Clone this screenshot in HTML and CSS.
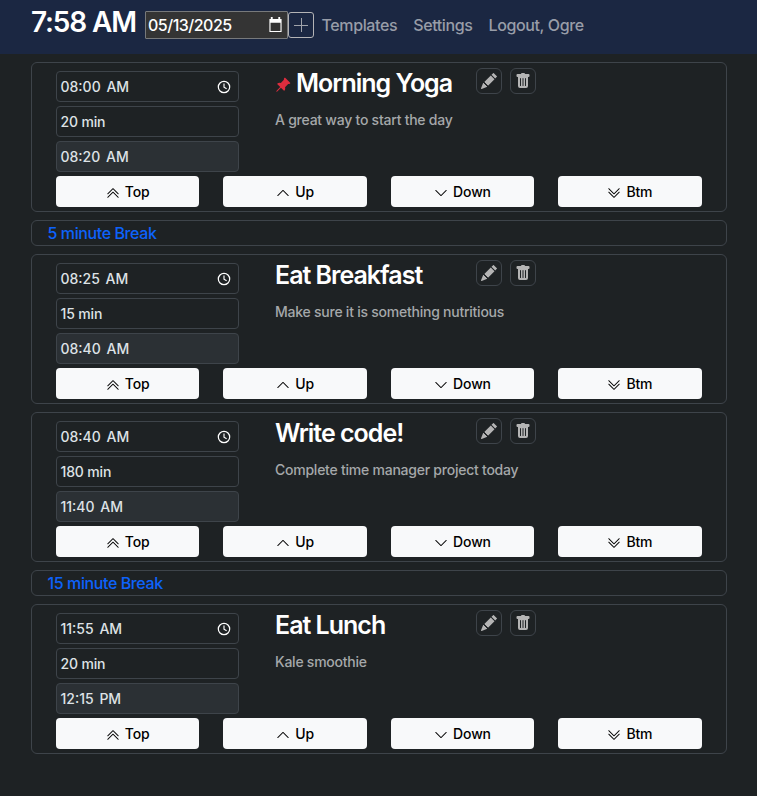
FILE: index.html
```html
<!DOCTYPE html>
<html lang="en">
<head>
<meta charset="utf-8">
<title>Time Manager</title>
<link rel="stylesheet" href="styles.css">
</head>
<body>
<svg class="sprite" aria-hidden="true">
  <symbol id="up" viewBox="0 0 16 16"><path fill-rule="evenodd" d="M7.646 4.646a.5.5 0 0 1 .708 0l6 6a.5.5 0 0 1-.708.708L8 5.707l-5.646 5.647a.5.5 0 0 1-.708-.708z"/></symbol>
  <symbol id="down" viewBox="0 0 16 16"><path fill-rule="evenodd" d="M1.646 4.646a.5.5 0 0 1 .708 0L8 10.293l5.646-5.647a.5.5 0 0 1 .708.708l-6 6a.5.5 0 0 1-.708 0l-6-6a.5.5 0 0 1 0-.708"/></symbol>
  <symbol id="top" viewBox="0 0 16 16"><path d="M7.646 2.646a.5.5 0 0 1 .708 0l6 6a.5.5 0 0 1-.708.708L8 3.707 2.354 9.354a.5.5 0 1 1-.708-.708z"/><path d="M7.646 6.646a.5.5 0 0 1 .708 0l6 6a.5.5 0 0 1-.708.708L8 7.707l-5.646 5.647a.5.5 0 0 1-.708-.708z"/></symbol>
  <symbol id="btm" viewBox="0 0 16 16"><path d="M1.646 6.646a.5.5 0 0 1 .708 0L8 12.293l5.646-5.647a.5.5 0 0 1 .708.708l-6 6a.5.5 0 0 1-.708 0l-6-6a.5.5 0 0 1 0-.708"/><path d="M1.646 2.646a.5.5 0 0 1 .708 0L8 8.293l5.646-5.647a.5.5 0 0 1 .708.708l-6 6a.5.5 0 0 1-.708 0l-6-6a.5.5 0 0 1 0-.708"/></symbol>
  <symbol id="pencil" viewBox="0 0 16 16"><path d="M12.854.146a.5.5 0 0 0-.707 0L10.5 1.793 14.207 5.5l1.647-1.646a.5.5 0 0 0 0-.708zm.646 6.061L9.793 2.5 3.293 9H3.5a.5.5 0 0 1 .5.5v.5h.5a.5.5 0 0 1 .5.5v.5h.5a.5.5 0 0 1 .5.5v.5h.5a.5.5 0 0 1 .5.5v.207zm-7.468 7.468A.5.5 0 0 1 6 13.5V13h-.5a.5.5 0 0 1-.5-.5V12h-.5a.5.5 0 0 1-.5-.5V11h-.5a.5.5 0 0 1-.5-.5V10h-.5a.5.5 0 0 1-.175-.032l-.179.178a.5.5 0 0 0-.11.168l-2 5a.5.5 0 0 0 .65.65l5-2a.5.5 0 0 0 .168-.11z"/></symbol>
  <symbol id="trash" viewBox="0 0 16 16"><path d="M2.500 1a1 1 0 0 0-1 1v1a1 1 0 0 0 1 1H3v9a2 2 0 0 0 2 2h6a2 2 0 0 0 2-2V4h.5a1 1 0 0 0 1-1V2a1 1 0 0 0-1-1H10a1 1 0 0 0-1-1H7a1 1 0 0 0-1 1zm3 4a.5.5 0 0 1 .5.5v7a.5.5 0 0 1-1 0v-7a.5.5 0 0 1 .5-.5M8 5a.5.5 0 0 1 .5.5v7a.5.5 0 0 1-1 0v-7A.5.5 0 0 1 8 5m3 .5v7a.5.5 0 0 1-1 0v-7a.5.5 0 0 1 1 0"/></symbol>
  <symbol id="clock" viewBox="0 0 16 16"><circle cx="8" cy="8" r="6.500" fill="none" stroke="currentColor" stroke-width="1.400"/><path d="M8 4v4.300l3 1.700" fill="none" stroke="currentColor" stroke-width="1.300"/></symbol>
  <symbol id="calendar" viewBox="0 0 16 16"><path d="M3 0h2v2h6V0h2v2h1.500v14h-13V2H3zM2.700 6v8.800h10.600V6z" fill-rule="evenodd"/></symbol>
  <symbol id="pin" viewBox="0 0 16 16"><path d="M9.828.722a.5.5 0 0 1 .354.146l4.950 4.950a.5.5 0 0 1 0 .707c-.480.480-1.072.588-1.503.588-.177 0-.335-.018-.460-.039l-3.134 3.134a6 6 0 0 1 .160 1.013c.046.702-.032 1.687-.720 2.375a.5.5 0 0 1-.707 0l-2.829-2.828-3.182 3.182c-.195.195-1.219.902-1.414.707s.512-1.220.707-1.414l3.182-3.182-2.828-2.829a.5.5 0 0 1 0-.707c.688-.688 1.673-.767 2.375-.720a6 6 0 0 1 1.013.160l3.134-3.133a3 3 0 0 1-.040-.461c0-.430.108-1.022.589-1.503a.5.5 0 0 1 .353-.146"/></symbol>
</svg>

<header class="navbar">
  <div class="clock-now">7:58 AM</div>
  <div class="date"><span>05/13/2025</span><svg><use href="#calendar"/></svg></div>
  <button class="add" aria-label="Add"></button>
  <nav><a>Templates</a><a>Settings</a><a>Logout, Ogre</a></nav>
</header>

<main>
  <section class="card">
    <div class="details">
      <div class="fields"><div class="field time"><span>08:00 AM</span><svg><use href="#clock"/></svg></div><div class="field">20 min</div><div class="field time end">08:20 AM</div></div>
      <div class="info"><h2><svg class="pin"><use href="#pin"/></svg>Morning Yoga</h2><p>A great way to start the day</p></div>
      <div class="tools"><button><svg><use href="#pencil"/></svg></button><button><svg><use href="#trash"/></svg></button></div>
    </div>
    <div class="moves"><button><svg><use href="#top"/></svg>Top</button><button><svg><use href="#up"/></svg>Up</button><button><svg><use href="#down"/></svg>Down</button><button><svg><use href="#btm"/></svg>Btm</button></div>
  </section>
  <div class="break">5 minute Break</div>
  <section class="card">
    <div class="details">
      <div class="fields"><div class="field time"><span>08:25 AM</span><svg><use href="#clock"/></svg></div><div class="field">15 min</div><div class="field time end">08:40 AM</div></div>
      <div class="info"><h2>Eat Breakfast</h2><p>Make sure it is something nutritious</p></div>
      <div class="tools"><button><svg><use href="#pencil"/></svg></button><button><svg><use href="#trash"/></svg></button></div>
    </div>
    <div class="moves"><button><svg><use href="#top"/></svg>Top</button><button><svg><use href="#up"/></svg>Up</button><button><svg><use href="#down"/></svg>Down</button><button><svg><use href="#btm"/></svg>Btm</button></div>
  </section>
  <section class="card">
    <div class="details">
      <div class="fields"><div class="field time"><span>08:40 AM</span><svg><use href="#clock"/></svg></div><div class="field">180 min</div><div class="field time end">11:40 AM</div></div>
      <div class="info"><h2>Write code!</h2><p>Complete time manager project today</p></div>
      <div class="tools"><button><svg><use href="#pencil"/></svg></button><button><svg><use href="#trash"/></svg></button></div>
    </div>
    <div class="moves"><button><svg><use href="#top"/></svg>Top</button><button><svg><use href="#up"/></svg>Up</button><button><svg><use href="#down"/></svg>Down</button><button><svg><use href="#btm"/></svg>Btm</button></div>
  </section>
  <div class="break">15 minute Break</div>
  <section class="card">
    <div class="details">
      <div class="fields"><div class="field time"><span>11:55 AM</span><svg><use href="#clock"/></svg></div><div class="field">20 min</div><div class="field time end">12:15 PM</div></div>
      <div class="info"><h2>Eat Lunch</h2><p>Kale smoothie</p></div>
      <div class="tools"><button><svg><use href="#pencil"/></svg></button><button><svg><use href="#trash"/></svg></button></div>
    </div>
    <div class="moves"><button><svg><use href="#top"/></svg>Top</button><button><svg><use href="#up"/></svg>Up</button><button><svg><use href="#down"/></svg>Down</button><button><svg><use href="#btm"/></svg>Btm</button></div>
  </section>
</main>
</body>
</html>
```
FILE: styles.css
```css
* { box-sizing: border-box; }
body {
  margin: 0;
  height: 796px;
  overflow: hidden;
  background: #1e2224;
  color: #dee2e6;
  font-family: Inter, "Liberation Sans", sans-serif;
  font-size: 14px;
  font-weight: 450;
}
.sprite { display: none; }
svg { fill: currentColor; flex: none; }
button { font: inherit; padding: 0; }

.navbar {
  display: flex;
  align-items: flex-start;
  height: 54px;
  padding: 0 31px;
  background: #1b2742;
  white-space: nowrap;
}
.clock-now {
  width: 114px;
  padding-top: 5px;
  color: #fff;
  font-size: 28px;
  font-weight: 600;
  line-height: 34px;
  letter-spacing: -1.15px;
}
.date {
  display: flex;
  align-items: center;
  justify-content: space-between;
  width: 143px;
  height: 28px;
  margin-top: 11px;
  padding: 0 4px 0 2px;
  border: 1px solid #77797b;
  border-radius: 1px;
  background: #343434;
  color: #fff;
  font-size: 16px;
  letter-spacing: -0.5px;
}
.date svg { width: 15px; height: 15px; margin-top: -2px; }
.add {
  width: 26px;
  height: 26px;
  margin-top: 12px;
  border: 1.5px solid #b4b4b6;
  border-radius: 3px;
  background:
    linear-gradient(#a0a3aa, #a0a3aa) center / 14px 1px no-repeat,
    linear-gradient(#a0a3aa, #a0a3aa) center / 1px 14px no-repeat;
}
nav { display: flex; gap: 16px; margin: 15px 0 0 7.5px; color: #989da8; font-size: 16px; line-height: 20px; letter-spacing: -0.38px; }

main { display: flex; flex-direction: column; gap: 8px; padding: 8px 30px 0 31px; }
.card {
  height: 150px;
  padding: 8px 24px 4px;
  border: 1px solid #3e444a;
  border-radius: 6px;
}
.details { display: flex; height: 105px; }
.fields { display: flex; flex-direction: column; gap: 4px; width: 183px; }
.field {
  display: flex;
  align-items: center;
  justify-content: space-between;
  height: 31px;
  padding: 0 7.5px 0 3.5px;
  border: 1px solid #3e444a;
  border-radius: 4px;
  letter-spacing: -0.15px;
}
.field.time { letter-spacing: 0; word-spacing: 2px; }
.end { background: #2b3034; }
.field svg { width: 14px; height: 14px; color: #fff; }
.info { width: 237px; padding-left: 36px; white-space: nowrap; }
h2 { display: flex; align-items: center; margin: -3px 0 0; color: #fff; font-size: 25px; font-weight: 600; line-height: 30px; letter-spacing: -1px; }
.pin { width: 16px; height: 16px; margin: 3px 5px 0 0; color: #dc2d3e; }
p { margin: 12px 0 0; color: #a5a8aa; font-size: 14px; line-height: 20px; letter-spacing: -0.24px; }
.tools { display: flex; gap: 8px; margin-top: -3px; }
.tools button { display: grid; place-items: center; width: 26px; height: 26px; border: 1px solid #3e444a; border-radius: 6px; background: none; color: #b4b4b4; }
.tools svg { width: 16px; height: 16px; }
.moves { display: grid; grid-template-columns: repeat(4, 1fr); gap: 24px; margin-right: 0.4px; }
.moves button { display: flex; align-items: center; justify-content: center; gap: 5px; height: 31px; border: 0; border-radius: 4px; background: #f8f9fa; color: #000; letter-spacing: -0.15px; }
.moves svg { width: 14px; height: 14px; margin-top: 2px; }
.break { height: 26px; padding-left: 15.5px; border: 1px solid #3e444a; border-radius: 6px; color: #0d62fb; font-size: 16px; line-height: 24px; letter-spacing: -0.4px; }
```
